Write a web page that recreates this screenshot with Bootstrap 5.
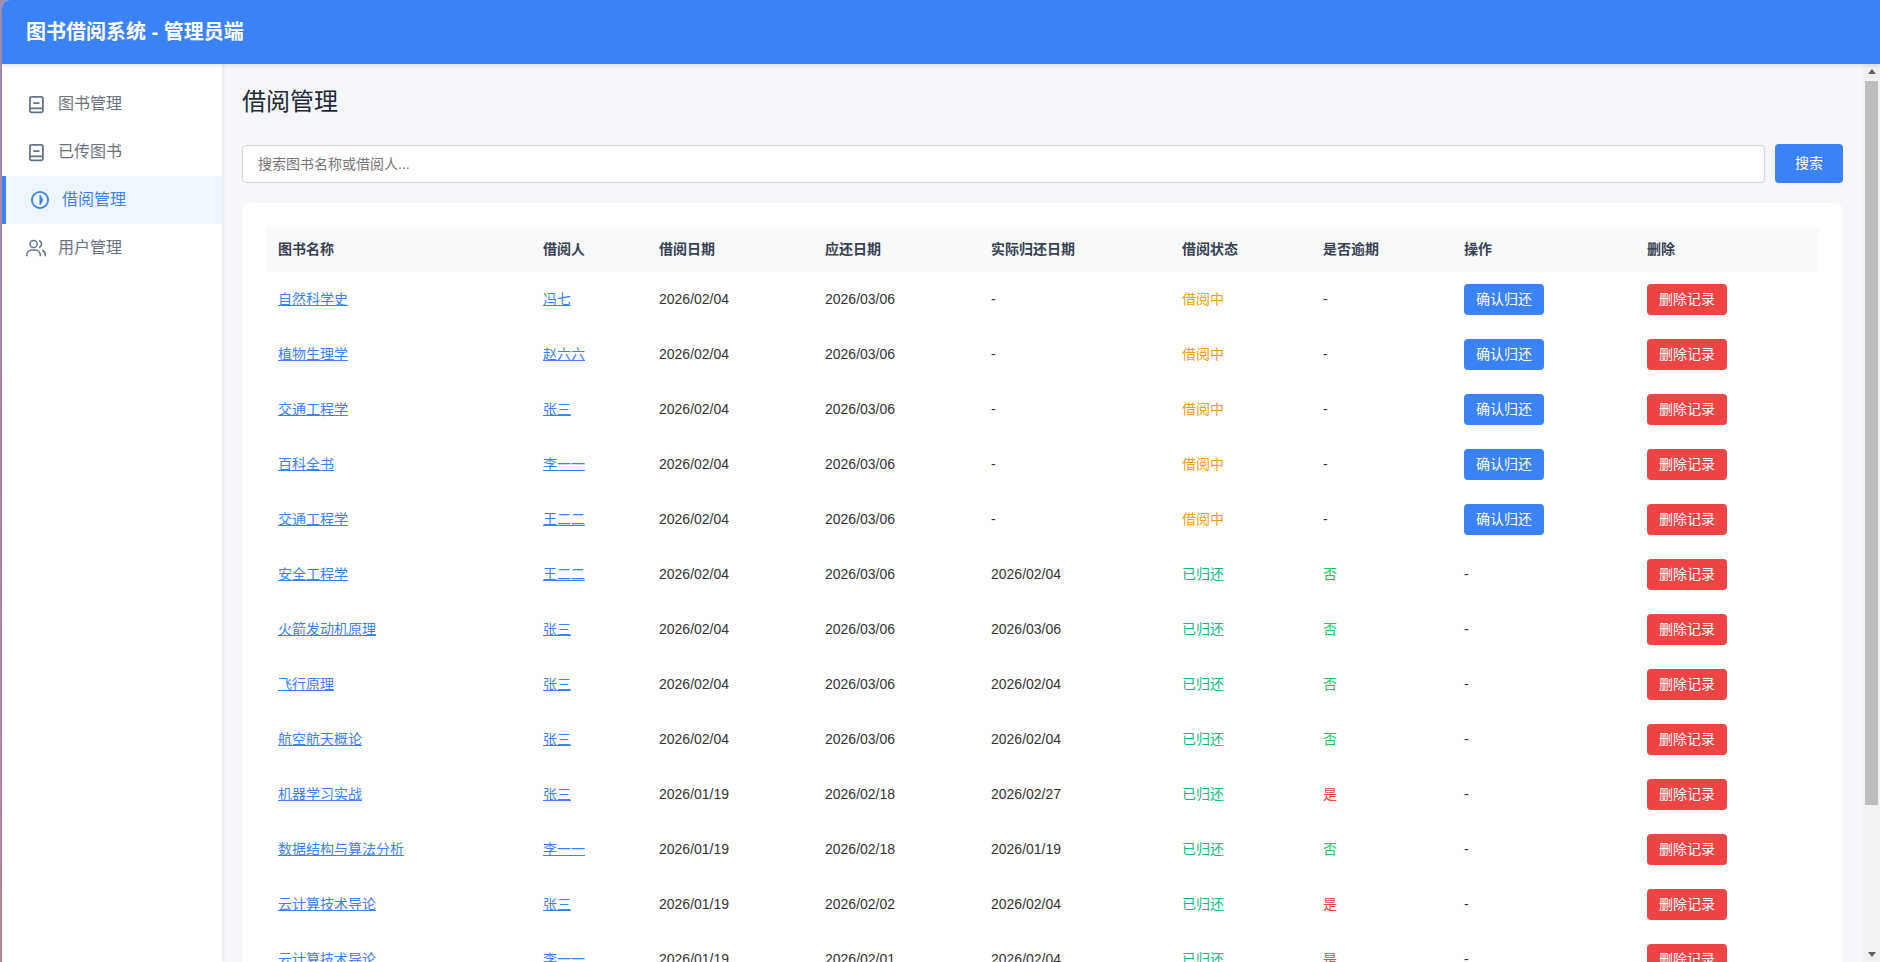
<!DOCTYPE html>
<html lang="zh-CN">
<head>
<meta charset="utf-8">
<title>图书借阅系统 - 管理员端</title>
<link href="https://cdn.jsdelivr.net/npm/bootstrap@5.3.0/dist/css/bootstrap.min.css" rel="stylesheet">
<style>
html,body{height:100%;overflow:hidden;}
body{font-family:"Liberation Sans","Noto Sans CJK SC",sans-serif;background:linear-gradient(180deg,#9c8cb0,#b8849a);color:#333;}
.shell{height:962px;margin-left:2px;border-top-left-radius:8px;overflow:hidden;background:#f5f7fa;}
.topbar{height:64px;flex:none;background:#3b82f6;color:#fff;padding:0 24px;box-shadow:0 2px 4px rgba(0,0,0,.1);position:relative;z-index:2;}
.topbar h1{font-size:20px;font-weight:700;margin:0;line-height:1.5;}
.below{height:898px;}
.side{width:220px;flex:none;background:#fff;padding-top:16px;box-shadow:2px 0 4px rgba(0,0,0,.05);position:relative;z-index:1;}
.side-item{height:48px;padding-left:24px;color:#6b7280;font-size:16px;gap:12px;}
.side-item svg{width:20px;height:20px;flex:none;}
.side-item.on{background:#eff6ff;color:#3b82f6;border-left:4px solid #3b82f6;}
.scroller{flex:1;min-width:0;overflow:hidden;padding:20px 20px 20px 20px;}
.track{width:17px;flex:none;background:#f1f1f1;padding-top:17px;}
.thumb{height:724px;width:13px;margin-left:2px;background:#bdbdbd;}
.arrow{width:0;height:0;border-left:4px solid transparent;border-right:4px solid transparent;position:absolute;left:5px;}
.arrow-up{top:5px;border-bottom:5px solid #606060;}
.arrow-down{bottom:5px;border-top:5px solid #606060;}
.page-title{font-size:24px;font-weight:400;color:#1f2937;margin:0 0 24px;line-height:36px;}
.search-row{gap:10px;margin-bottom:20px;height:39px;}
.search-box{height:38px;font-size:14px;border:1px solid #d1d5db;border-radius:4px;padding:8px 15px;color:#333;}
.search-box::placeholder{color:#757575;}
.search-btn{height:39px;width:68px;flex:none;font-size:14px;border-radius:4px;background:#3b82f6;border:0;color:#fff;padding:0;}
.panel{background:#fff;border-radius:8px;padding:24px;box-shadow:0 1px 3px rgba(0,0,0,.03);}
.loans{table-layout:fixed;width:100%;border-collapse:collapse;font-size:14px;margin:0;}
.loans th{background:#f9fafb;height:45px;padding:0 12px;font-weight:700;color:#374151;border:0;vertical-align:middle;}
.loans td{height:55px;padding:0 12px;border:0;color:#333;vertical-align:middle;}
.loans a{color:#3b82f6;}
.c1{width:265px}.c2{width:116px}.c3{width:166px}.c4{width:166px}.c5{width:191px}.c6{width:141px}.c7{width:141px}.c8{width:183px}
.act{height:31px;font-size:14px;line-height:31px;padding:0 8px;width:80px;border-radius:4px;border:0;color:#fff;}
.act-blue{background:#3b82f6;}
.act-red{background:#ef4444;}
.st-lend{color:#f59e0b!important}
.st-back{color:#10b981!important}
.ov-no{color:#22c55e!important}
.ov-yes{color:#ef4444!important}
</style>
</head>
<body>
<div class="shell d-flex flex-column">
  <header class="topbar d-flex align-items-center"><h1>图书借阅系统 - 管理员端</h1></header>
  <div class="below d-flex">
    <nav class="side">
      <div class="side-item d-flex align-items-center"><svg viewBox="0 0 20 20" fill="none" stroke="#64748b" stroke-width="1.8"><rect x="3.9" y="2.9" width="13" height="15.4" rx="1.8"/><path d="M3.9 14.4h13"/><path d="M7.2 9.2h6.2"/></svg><span>图书管理</span></div>
      <div class="side-item d-flex align-items-center"><svg viewBox="0 0 20 20" fill="none" stroke="#64748b" stroke-width="1.8"><rect x="3.9" y="2.9" width="13" height="15.4" rx="1.8"/><path d="M3.9 14.4h13"/><path d="M7.2 9.2h6.2"/></svg><span>已传图书</span></div>
      <div class="side-item on d-flex align-items-center"><svg viewBox="0 0 20 20" fill="none" stroke="#3b82f6" stroke-width="1.8"><circle cx="10" cy="10" r="8.1"/><path d="M10 5.2C12 7 12.8 8.5 12.8 10S12 13 10 14.8z" fill="#3b82f6" stroke="none"/><path d="M10 5v10" stroke-width="1"/></svg><span>借阅管理</span></div>
      <div class="side-item d-flex align-items-center"><svg viewBox="0 0 20 20" fill="none" stroke="#64748b" stroke-width="1.5"><circle cx="7.6" cy="6" r="3.6"/><path d="M.9 18.2v-1.4a4.8 4.8 0 0 1 4.8-4.8h3.8a4.8 4.8 0 0 1 4.8 4.8v1.4"/><path d="M13 2.5a3.7 3.7 0 0 1 0 7"/><path d="M16.2 12.3a4.8 4.8 0 0 1 3 4.5v1.4"/></svg><span>用户管理</span></div>
    </nav>
    <main class="scroller">
      <h2 class="page-title">借阅管理</h2>
      <form class="d-flex align-items-center search-row" onsubmit="return false">
        <input class="form-control search-box flex-grow-1" placeholder="搜索图书名称或借阅人...">
        <button class="btn search-btn">搜索</button>
      </form>
      <section class="panel">
        <table class="table loans">
          <thead><tr>
            <th class="c1">图书名称</th><th class="c2">借阅人</th><th class="c3">借阅日期</th><th class="c4">应还日期</th><th class="c5">实际归还日期</th><th class="c6">借阅状态</th><th class="c7">是否逾期</th><th class="c8">操作</th><th>删除</th>
          </tr></thead>
          <tbody id="rows"></tbody>
        </table>
      </section>
    </main>
    <div class="track position-relative"><span class="arrow arrow-up"></span><div class="thumb"></div><span class="arrow arrow-down"></span></div>
  </div>
</div>
<script>
var data=[
["自然科学史","冯七","2026/02/04","2026/03/06","-",0,""],
["植物生理学","赵六六","2026/02/04","2026/03/06","-",0,""],
["交通工程学","张三","2026/02/04","2026/03/06","-",0,""],
["百科全书","李一一","2026/02/04","2026/03/06","-",0,""],
["交通工程学","王二二","2026/02/04","2026/03/06","-",0,""],
["安全工程学","王二二","2026/02/04","2026/03/06","2026/02/04",1,"否"],
["火箭发动机原理","张三","2026/02/04","2026/03/06","2026/03/06",1,"否"],
["飞行原理","张三","2026/02/04","2026/03/06","2026/02/04",1,"否"],
["航空航天概论","张三","2026/02/04","2026/03/06","2026/02/04",1,"否"],
["机器学习实战","张三","2026/01/19","2026/02/18","2026/02/27",1,"是"],
["数据结构与算法分析","李一一","2026/01/19","2026/02/18","2026/01/19",1,"否"],
["云计算技术导论","张三","2026/01/19","2026/02/02","2026/02/04",1,"是"],
["云计算技术导论","李一一","2026/01/19","2026/02/01","2026/02/04",1,"是"]
];
document.getElementById('rows').innerHTML=data.map(function(r){
 return '<tr><td><a href="#">'+r[0]+'</a></td><td><a href="#">'+r[1]+'</a></td><td>'+r[2]+'</td><td>'+r[3]+'</td><td>'+r[4]+'</td>'+
 '<td class="'+(r[5]?'st-back':'st-lend')+'">'+(r[5]?'已归还':'借阅中')+'</td>'+
 '<td class="'+(r[6]==='否'?'ov-no':r[6]==='是'?'ov-yes':'')+'">'+(r[6]||'-')+'</td>'+
 '<td>'+(r[5]?'-':'<button class="btn act act-blue d-block">确认归还</button>')+'</td>'+
 '<td><button class="btn act act-red d-block">删除记录</button></td></tr>';
}).join('');
</script>
<script src="https://cdn.jsdelivr.net/npm/bootstrap@5.3.0/dist/js/bootstrap.bundle.min.js"></script>
</body>
</html>
